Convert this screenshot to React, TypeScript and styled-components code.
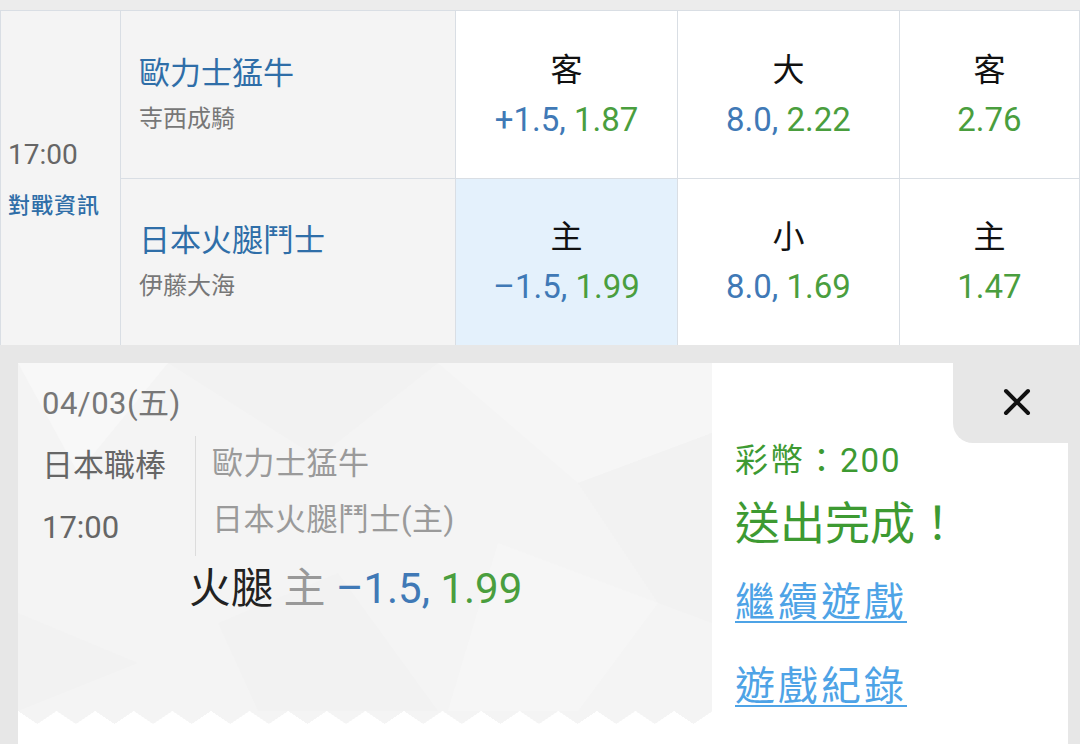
import { Fragment } from 'react'
import styled, { createGlobalStyle } from 'styled-components'

const GlobalStyle = createGlobalStyle`
  html, body {
    margin: 0;
    padding: 0;
    background: #e7e7e7;
  }
  body {
    font-family: Roboto, "Noto Sans CJK TC", sans-serif;
    width: 1080px;
    height: 744px;
    overflow: hidden;
  }
`

const color = {
  border: '#d9dee4',
  cellGray: '#f4f4f4',
  selected: '#e4f1fc',
  teamBlue: '#2f6ea8',
  oddsBlue: '#4079b6',
  oddsGreen: '#4a9e3e',
  successGreen: '#3d9a32',
  link: '#4ea3e6',
  sheet: '#e7e7e7',
}

type Odds = { label: string; line?: string; price: string; selected?: boolean }
type TeamRow = { team: string; pitcher: string; odds: Odds[] }

const rows: TeamRow[] = [
  {
    team: '歐力士猛牛',
    pitcher: '寺西成騎',
    odds: [
      { label: '客', line: '+1.5,', price: '1.87' },
      { label: '大', line: '8.0,', price: '2.22' },
      { label: '客', price: '2.76' },
    ],
  },
  {
    team: '日本火腿鬥士',
    pitcher: '伊藤大海',
    odds: [
      { label: '主', line: '–1.5,', price: '1.99', selected: true },
      { label: '小', line: '8.0,', price: '1.69' },
      { label: '主', price: '1.47' },
    ],
  },
]

export default function App() {
  return (
    <Page>
      <GlobalStyle />
      <TopStrip />
      <GameTable>
        <TimeCell>
          <GameTime>17:00</GameTime>
          <MatchupLink>對戰資訊</MatchupLink>
        </TimeCell>
        {rows.map(row => (
          <Fragment key={row.team}>
            <TeamCell>
              <TeamName>{row.team}</TeamName>
              <Pitcher>{row.pitcher}</Pitcher>
            </TeamCell>
            {row.odds.map((o, i) => (
              <OddsCell key={i} $selected={o.selected}>
                <OddsLabel>{o.label}</OddsLabel>
                <OddsValue>
                  {o.line && <Line>{o.line} </Line>}
                  <Price>{o.price}</Price>
                </OddsValue>
              </OddsCell>
            ))}
          </Fragment>
        ))}
      </GameTable>

      <Sheet>
        <Card>
          <TicketPanel>
            <TicketBody>
              {/* faint low-poly texture behind the ticket */}
              <Backdrop viewBox="0 0 694 348" preserveAspectRatio="none">
                <polygon points="0,0 150,0 60,110" fill="#f8f8f8" />
                <polygon points="150,0 420,0 300,95" fill="#f2f2f2" />
                <polygon points="420,0 694,0 694,70 560,120" fill="#f6f6f6" />
                <polygon points="0,250 120,300 0,348" fill="#f2f2f2" />
                <polygon points="200,260 320,210 420,348 240,348" fill="#f2f2f2" />
                <polygon points="480,180 640,240 560,348 430,348" fill="#f6f6f6" />
                <polygon points="560,120 694,70 694,260 640,240" fill="#f2f2f2" />
              </Backdrop>
              <TicketContent>
                <TicketDate>04/03(五)</TicketDate>
                <InfoRow>
                  <LeagueColumn>
                    <League>日本職棒</League>
                    <League>17:00</League>
                  </LeagueColumn>
                  <TeamsColumn>
                    <TicketTeam>歐力士猛牛</TicketTeam>
                    <TicketTeam>日本火腿鬥士(主)</TicketTeam>
                  </TeamsColumn>
                </InfoRow>
                <Pick>
                  <PickTeam>火腿</PickTeam> <PickSide>主</PickSide> <Line>–1.5,</Line> <Price>1.99</Price>
                </Pick>
              </TicketContent>
            </TicketBody>
            <ZigzagEdge />
          </TicketPanel>

          <ResultPanel>
            <CloseTab aria-label="close">
              <svg width="28" height="28" viewBox="0 0 28 28">
                <path d="M3 3 25 25M25 3 3 25" stroke="#111" strokeWidth="4" strokeLinecap="round" />
              </svg>
            </CloseTab>
            <Coins>彩幣：200</Coins>
            <Success>送出完成！</Success>
            <ResultLink href="#">繼續遊戲</ResultLink>
            <ResultLink href="#">遊戲紀錄</ResultLink>
          </ResultPanel>
        </Card>
      </Sheet>
    </Page>
  )
}

const Page = styled.div`
  width: 1080px;
  height: 744px;
  display: flex;
  flex-direction: column;
  overflow: hidden;
`

const TopStrip = styled.div`
  height: 10px;
  background: #ececec;
  flex-shrink: 0;
`

const GameTable = styled.div`
  display: grid;
  grid-template-columns: 120px 335px 222px 222px 1fr;
  grid-template-rows: 168px 166px;
  border-top: 1px solid ${color.border};
  border-left: 1px solid ${color.border};
  flex-shrink: 0;
  box-sizing: border-box;
`

const TimeCell = styled.div`
  grid-row: span 2;
  background: ${color.cellGray};
  border-right: 1px solid ${color.border};
  display: flex;
  flex-direction: column;
  justify-content: center;
  padding-left: 7px;
  gap: 16px;
`

const GameTime = styled.div`
  font-size: 28px;
  line-height: 40px;
  color: #666;
`

const MatchupLink = styled.div`
  font-size: 22px;
  line-height: 30px;
  font-weight: 500;
  color: ${color.teamBlue};
  letter-spacing: 1px;
`

const TeamCell = styled.div`
  background: ${color.cellGray};
  border-right: 1px solid ${color.border};
  border-bottom: 1px solid ${color.border};
  display: flex;
  flex-direction: column;
  justify-content: center;
  padding-left: 18px;
  gap: 8px;
  &:nth-of-type(n + 6) {
    border-bottom: none;
  }
`

const TeamName = styled.div`
  font-size: 31px;
  line-height: 40px;
  color: ${color.teamBlue};
`

const Pitcher = styled.div`
  font-size: 24px;
  line-height: 34px;
  color: #777;
`

const OddsCell = styled.div<{ $selected?: boolean }>`
  background: ${p => (p.$selected ? color.selected : '#fff')};
  border-right: 1px solid ${color.border};
  border-bottom: 1px solid ${color.border};
  display: flex;
  flex-direction: column;
  align-items: center;
  justify-content: center;
  gap: 6px;
  &:nth-last-of-type(-n + 3) {
    border-bottom: none;
  }
`

const OddsLabel = styled.div`
  font-size: 32px;
  line-height: 44px;
  color: #111;
`

const OddsValue = styled.div`
  font-size: 33px;
  line-height: 44px;
  white-space: pre;
`

const Line = styled.span`
  color: ${color.oddsBlue};
`

const Price = styled.span`
  color: ${color.oddsGreen};
`

const Sheet = styled.div`
  flex: 1;
  background: ${color.sheet};
  padding: 18px 12px 0 18px;
  display: flex;
  min-height: 0;
`

const Card = styled.div`
  flex: 1;
  display: flex;
  background: #fff;
  align-items: flex-start;
`

const TicketPanel = styled.div`
  width: 694px;
  height: 361px;
  display: flex;
  flex-direction: column;
  flex-shrink: 0;
`

const TicketBody = styled.div`
  flex: 1;
  position: relative;
  background: ${color.cellGray};
  overflow: hidden;
`

const Backdrop = styled.svg`
  position: absolute;
  inset: 0;
  width: 100%;
  height: 100%;
`

const TicketContent = styled.div`
  position: relative;
  padding: 21px 0 0 24px;
  display: flex;
  flex-direction: column;
`

const TicketDate = styled.div`
  font-size: 31px;
  line-height: 40px;
  color: #777;
  letter-spacing: 0.5px;
`

const InfoRow = styled.div`
  display: flex;
  margin-top: 12px;
`

const LeagueColumn = styled.div`
  width: 153px;
  display: flex;
  flex-direction: column;
  gap: 6px;
  padding-top: 2px;
`

const League = styled.div`
  font-size: 31px;
  line-height: 56px;
  color: #666;
`

const TeamsColumn = styled.div`
  border-left: 1px solid #dcdcdc;
  padding-left: 16px;
  display: flex;
  flex-direction: column;
`

const TicketTeam = styled.div`
  font-size: 31px;
  line-height: 56px;
  color: #9a9a9a;
  letter-spacing: 0.5px;
`

const Pick = styled.div`
  margin: 8px 0 0 147px;
  font-size: 42px;
  line-height: 50px;
  white-space: pre;
`

const PickTeam = styled.span`
  color: #222;
`

const PickSide = styled.span`
  color: #999;
`

const ZigzagEdge = styled.div`
  height: 13px;
  flex-shrink: 0;
  background: conic-gradient(from -56deg at 50% 100%, ${color.cellGray} 112deg, transparent 0) 0 0 / 38.6px 13px repeat-x;
  filter: blur(0.6px);
`

const ResultPanel = styled.div`
  flex: 1;
  align-self: stretch;
  position: relative;
  display: flex;
  flex-direction: column;
  align-items: flex-start;
  padding: 76px 0 0 23px;
`

const CloseTab = styled.button`
  position: absolute;
  top: -18px;
  right: -12px;
  width: 127px;
  height: 98px;
  border: none;
  margin: 0;
  padding: 16px 0 0;
  background: ${color.sheet};
  border-bottom-left-radius: 20px;
  display: flex;
  align-items: center;
  justify-content: center;
  cursor: pointer;
`

const Coins = styled.div`
  font-size: 33px;
  line-height: 44px;
  color: ${color.successGreen};
  letter-spacing: 2px;
`

const Success = styled.div`
  margin-top: 14px;
  font-size: 45px;
  line-height: 56px;
  color: ${color.successGreen};
`

const ResultLink = styled.a`
  margin-top: 24px;
  font-size: 40px;
  line-height: 52px;
  color: ${color.link};
  letter-spacing: 3px;
  text-decoration: underline;
  text-decoration-thickness: 2px;
  text-underline-offset: 5px;
  & + & {
    margin-top: 32px;
  }
`
